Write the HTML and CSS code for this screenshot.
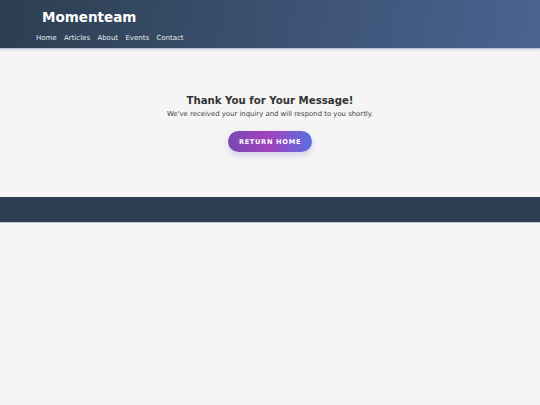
FILE: index.html
```html
<!DOCTYPE html>
<html>
<head>
<meta charset="utf-8">
<link rel="stylesheet" href="styles.css">
</head>
<body>
<header class="site-header">
  <div class="brand">Momenteam</div>
  <nav class="nav">
    <a href="#">Home</a>
    <a href="#">Articles</a>
    <a href="#">About</a>
    <a href="#">Events</a>
    <a href="#">Contact</a>
  </nav>
</header>
<main class="content">
  <h1 class="title">Thank You for Your Message!</h1>
  <p class="subtitle">We've received your inquiry and will respond to you shortly.</p>
  <a class="btn" href="#">RETURN HOME</a>
</main>
<footer class="site-footer"></footer>
</body>
</html>
```
FILE: styles.css
```css
* { box-sizing: border-box; }
html, body { margin: 0; padding: 0; }
body {
  background: #f5f5f5;
  font-family: "DejaVu Sans", Verdana, sans-serif;
  color: #333;
}
.site-header {
  height: 49px;
  background: linear-gradient(100deg, #2c3e50 0%, #4a6491 100%);
  border-bottom: 1px solid #b8c4d8;
  padding: 8px 0 0 36px;
  box-shadow: 0 1px 3px rgba(0,0,0,0.12);
}
.brand {
  color: #fff;
  font-weight: bold;
  font-size: 13.5px;
  line-height: 18px;
  margin-left: 6px;
}
.nav {
  display: flex;
  gap: 7.3px;
  margin-top: 7px;
}
.nav a {
  color: #e6eaf0;
  text-decoration: none;
  font-size: 7px;
  line-height: 10px;
}
.content {
  height: 148px;
  display: flex;
  flex-direction: column;
  align-items: center;
  padding-top: 45px;
}
.title {
  margin: 0;
  font-size: 10.2px;
  line-height: 14px;
  font-weight: bold;
  color: #333;
}
.subtitle {
  margin: 2px 0 0;
  font-size: 6.9px;
  line-height: 9px;
  color: #444;
}
.btn {
  margin-top: 12px;
  width: 84px;
  height: 21px;
  border-radius: 11px;
  display: flex;
  align-items: center;
  justify-content: center;
  background: linear-gradient(90deg, #7a48b3 0%, #a043bd 50%, #5a70e2 100%);
  color: #fff;
  font-weight: bold;
  font-size: 6.6px;
  letter-spacing: 0.7px;
  text-decoration: none;
  box-shadow: 0 3px 6px rgba(120, 80, 200, 0.25);
}
.site-footer {
  height: 26px;
  background: #2c3e50;
  border-bottom: 1px solid #b8c4d8;
}
```
